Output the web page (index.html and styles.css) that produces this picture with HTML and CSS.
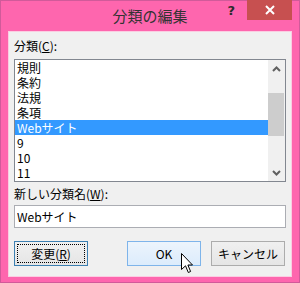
FILE: index.html
```html
<!DOCTYPE html>
<html lang="ja">
<head>
  <meta charset="UTF-8">
  <title>分類の編集</title>
  <link rel="stylesheet" href="styles.css">
</head>
<body>
  <div class="window">
    <div class="titlebar">
      <span></span>
      <span class="title">分類の編集</span>
      <div class="caption-buttons">
        <span class="help">?</span>
        <span class="close">
          <svg width="10" height="10" viewBox="0 0 10 10"><path d="M1 1 L9 9 M9 1 L1 9" stroke="#fff" stroke-width="2"/></svg>
        </span>
      </div>
    </div>

    <div class="client">
      <label class="field-label">分類(<u>C</u>):</label>
      <div class="listbox">
        <ul class="items">
          <li>規則</li>
          <li>条約</li>
          <li>法規</li>
          <li>条項</li>
          <li class="selected">Webサイト</li>
          <li>9</li>
          <li>10</li>
          <li>11</li>
        </ul>
        <div class="scrollbar">
          <div class="arrow">
            <svg width="9" height="6" viewBox="0 0 9 6"><path d="M1 5 L4.5 1.5 L8 5" fill="none" stroke="#606060" stroke-width="2"/></svg>
          </div>
          <div class="track"><div class="thumb"></div></div>
          <div class="arrow">
            <svg width="9" height="6" viewBox="0 0 9 6"><path d="M1 1 L4.5 4.5 L8 1" fill="none" stroke="#606060" stroke-width="2"/></svg>
          </div>
        </div>
      </div>

      <label class="field-label second">新しい分類名(<u>W</u>):</label>
      <input class="name-input" type="text" value="Webサイト">

      <div class="buttons">
        <button class="btn focused"><span class="focus-rect">変更(<u>R</u>)</span></button>
        <div class="btn-group">
          <button class="btn hover">OK
            <svg class="cursor" width="13" height="21" viewBox="0 0 13 21"><path d="M0.5 0.5 L0.5 16.5 L4.5 12.8 L7.3 19.5 L9.6 18.5 L6.9 12 L11.5 12 Z" fill="#fff" stroke="#000" stroke-width="1"/></svg>
          </button>
          <button class="btn">キャンセル</button>
        </div>
      </div>
    </div>
  </div>
</body>
</html>
```

FILE: styles.css
```css
body {
  margin: 0;
  font-family: "Noto Sans CJK JP", "Noto Sans", sans-serif;
  font-size: 12px;
  color: #000;
}
.window {
  width: 300px;
  height: 283px;
  box-sizing: border-box;
  border: 1px solid #d15a9a;
  background-color: #fe66ae;
  padding: 0 7px 5px 7px;
  display: flex;
  flex-direction: column;
}
.titlebar {
  height: 30px;
  display: grid;
  grid-template-columns: 1fr auto 1fr;
  align-items: start;
}
.title {
  font-size: 15px;
  line-height: 18px;
  color: #333;
  margin-top: 6px;
}
.caption-buttons {
  display: flex;
  justify-content: flex-end;
  align-items: flex-start;
}
.help {
  font-family: "DejaVu Sans", sans-serif;
  font-weight: bold;
  font-size: 13px;
  line-height: 14px;
  color: #2b2b2b;
  margin-top: 3px;
  margin-right: 12px;
}
.close {
  width: 45px;
  height: 20px;
  margin-top: -1px;
  background-color: #c75050;
  display: flex;
  justify-content: center;
  align-items: center;
}
.client {
  flex: 1;
  background-color: #f0f0f0;
  border: 1px solid #fbcde2;
  padding: 6px 5px 0 5px;
}
.field-label {
  display: block;
  line-height: 16px;
  margin-bottom: 5px;
}
.field-label.second {
  margin-top: 4px;
  margin-bottom: 3px;
}
.listbox {
  height: 123px;
  box-sizing: border-box;
  border: 1px solid #828790;
  background-color: #fff;
  display: flex;
}
.items {
  list-style: none;
  margin: 0;
  padding: 0;
  flex: 1;
}
.items li {
  height: 15px;
  line-height: 15px;
  padding-left: 2px;
}
.items li.selected {
  background-color: #3399ff;
  color: #fff;
}
.scrollbar {
  width: 17px;
  background-color: #f0f0f0;
  display: flex;
  flex-direction: column;
}
.arrow {
  height: 17px;
  display: flex;
  justify-content: center;
  align-items: center;
}
.track {
  flex: 1;
  padding-top: 16px;
}
.thumb {
  height: 43px;
  margin-right: 1px;
  background-color: #cdcdcd;
}
.name-input {
  display: block;
  width: 272px;
  height: 23px;
  box-sizing: border-box;
  border: 1px solid #abadb3;
  padding: 0 2px;
  font-family: inherit;
  font-size: 12px;
  outline: none;
}
.buttons {
  margin-top: 13px;
  margin-right: 1px;
  display: flex;
  justify-content: space-between;
}
.btn-group {
  display: flex;
  gap: 10px;
}
.btn {
  width: 74px;
  height: 25px;
  box-sizing: border-box;
  border: 1px solid #acacac;
  background: linear-gradient(#f0f0f0, #e5e5e5);
  font-family: inherit;
  font-size: 12px;
  color: #000;
  padding: 0;
  position: relative;
}
.btn.focused {
  border-color: #3c7fb1;
  padding: 2px;
}
.focus-rect {
  display: block;
  height: 100%;
  box-sizing: border-box;
  border: 1px dotted #000;
  line-height: 17px;
}
.btn.hover {
  border-color: #7eb4ea;
  background: linear-gradient(#ecf4fc, #dcecfc);
}
.cursor {
  position: absolute;
  left: 53px;
  top: 11px;
}
```
